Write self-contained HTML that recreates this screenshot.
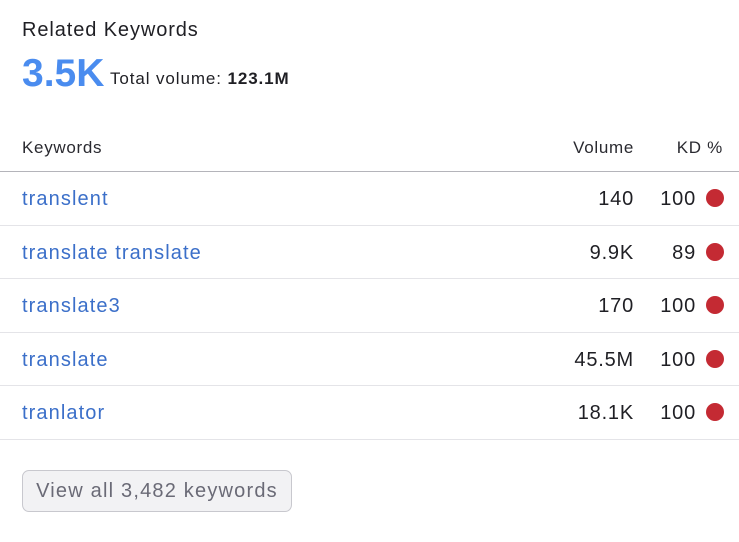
<!DOCTYPE html>
<html><head><style>
body{margin:0;width:739px;height:542px;background:#fff;font-family:"Liberation Sans",sans-serif;color:#222;position:relative;overflow:hidden}
.a{position:absolute;white-space:nowrap}
.h{left:22px;top:19px;font-size:20px;color:#1f1f24;letter-spacing:0.9px}
.big{left:22px;top:52px;font-size:39px;font-weight:bold;color:#4a8cef;letter-spacing:0px}
.tv{left:110px;top:69px;font-size:17px;color:#1f1f24;letter-spacing:0.9px}
.th{top:138px;font-size:17px;color:#2a2a30;letter-spacing:0.7px}
.line{position:absolute;left:0;width:739px;height:1px;background:#e4e4e8}
.kw{left:22px;font-size:20px;color:#3b6fc9;letter-spacing:1.1px}
.v{right:105px;font-size:20px;color:#1f1f24;text-align:right;letter-spacing:0.8px}
.kd{right:43px;font-size:20px;color:#1f1f24;text-align:right;letter-spacing:0.8px}
.dot{position:absolute;left:706px;width:18px;height:18px;border-radius:50%;background:#c42a33}
.btn{left:22px;top:470px;width:268px;height:40px;border:1px solid #c8c8ce;border-radius:7px;background:#f2f2f4;font-size:20px;color:#6a6a76;text-align:center;line-height:40px;letter-spacing:1.2px}
</style></head><body>
<div class="a h">Related Keywords</div>
<div class="a big">3.5K</div>
<div class="a tv">Total volume: <b>123.1M</b></div>
<div class="a th" style="left:22px">Keywords</div>
<div class="a th" style="right:105px">Volume</div>
<div class="a th" style="right:16px">KD %</div>
<div class="line" style="top:171px;background:#b4b4ba"></div>

<div class="a kw" style="top:188px">translent</div><div class="a v" style="top:188px">140</div><div class="a kd" style="top:188px">100</div><div class="dot" style="top:189px"></div>
<div class="line" style="top:225px"></div>
<div class="a kw" style="top:242px">translate translate</div><div class="a v" style="top:242px">9.9K</div><div class="a kd" style="top:242px">89</div><div class="dot" style="top:243px"></div>
<div class="line" style="top:278px"></div>
<div class="a kw" style="top:295px">translate3</div><div class="a v" style="top:295px">170</div><div class="a kd" style="top:295px">100</div><div class="dot" style="top:296px"></div>
<div class="line" style="top:332px"></div>
<div class="a kw" style="top:349px">translate</div><div class="a v" style="top:349px">45.5M</div><div class="a kd" style="top:349px">100</div><div class="dot" style="top:350px"></div>
<div class="line" style="top:385px"></div>
<div class="a kw" style="top:402px">tranlator</div><div class="a v" style="top:402px">18.1K</div><div class="a kd" style="top:402px">100</div><div class="dot" style="top:403px"></div>
<div class="line" style="top:439px"></div>

<div class="a btn">View all 3,482 keywords</div>
</body></html>
